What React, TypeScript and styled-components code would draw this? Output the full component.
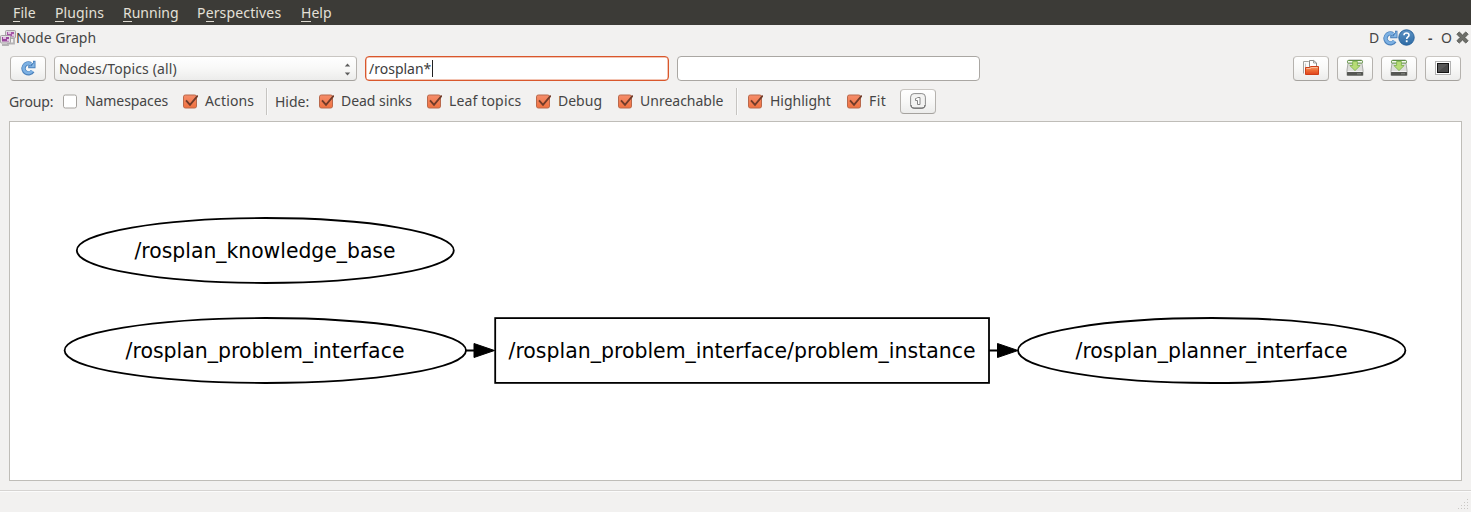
import React from 'react';
import styled, { createGlobalStyle } from 'styled-components';

const GlobalStyle = createGlobalStyle`
  * { box-sizing: border-box; }
  html, body { margin: 0; padding: 0; overflow: hidden; background: #f2f1f0; }
`;

const Window = styled.div`
  width: 100vw;
  height: 100vh;
  display: flex;
  flex-direction: column;
  background: #f2f1f0;
  color: #454545;
  font: 14px/20px "Noto Sans", "Open Sans", sans-serif;
`;

const MenuBar = styled.nav`
  height: 25px;
  flex: none;
  display: flex;
  padding: 3px 0 0 13px;
  background: #3c3b37;
  color: #e4e0d8;
`;

const Text = styled.span<{ $width: number; $spacing?: number }>`
  flex: none;
  display: block;
  width: ${p => p.$width}px;
  letter-spacing: ${p => p.$spacing ?? 0}px;
  white-space: nowrap;
`;

const GroupTitle = styled(Text)`
  padding-top: 1px;
`;

const Dash = styled(Text)`
  padding-left: 13px;
  font-weight: 600;
`;

const Mnemonic = styled.span`
  display: inline-block;
  height: 19px;
  border-bottom: 1px solid #dfdbd2;
`;

const TitleBar = styled.header`
  height: 25px;
  flex: none;
  display: flex;
  align-items: center;
  justify-content: space-between;
  padding-right: 2px;
`;

const TitleGroup = styled.div`
  display: flex;
  align-items: center;
`;

const Icon = styled.svg`
  display: block;
  flex: none;
`;

const Toolbar = styled.div`
  height: 37px;
  flex: none;
  display: flex;
  gap: 8px;
  padding: 6px 10px 0;
`;

const ToolButton = styled.button`
  width: 36px;
  height: 25px;
  flex: none;
  display: flex;
  align-items: center;
  justify-content: center;
  padding: 0 1px 1px 0;
  border: 1px solid #b5b2ae;
  border-top-color: #c9c6c2;
  border-bottom-color: #a5a29e;
  border-radius: 4px;
  background: linear-gradient(#ffffff, #f8f8f7 50%, #ececeb);
`;

const Select = styled.div`
  width: 303px;
  height: 25px;
  display: flex;
  justify-content: space-between;
  align-items: center;
  padding: 0 5px 0 4px;
  border: 1px solid #b5b2ae;
  border-top-color: #c9c6c2;
  border-bottom-color: #a5a29e;
  border-radius: 4px;
  background: linear-gradient(#ffffff, #f8f8f7 50%, #ececeb);
`;

const Field = styled.div<{ $focused?: boolean }>`
  width: ${p => (p.$focused ? 304 : 303)}px;
  height: 25px;
  display: flex;
  align-items: center;
  padding: 0 3px;
  border: ${p => (p.$focused ? '1px solid #d9572c' : '1px solid #aaa7a3')};
  border-radius: 4px;
  background: #fff;
  color: #3c3c3c;
  box-shadow: ${p => (p.$focused ? 'inset 0 0 0 0.5px #e78a69' : 'none')};
`;

const Caret = styled.span`
  width: 1px;
  height: 17px;
  background: #222;
`;

const Spacer = styled.div`
  flex: 1;
`;

const Options = styled.div`
  height: 34px;
  flex: none;
  display: flex;
  align-items: center;
  padding: 0 0 6px 9px;
`;

const Check = styled.label<{ $gap: number }>`
  display: flex;
  align-items: center;
  gap: 7px;
  margin-right: ${p => p.$gap}px;
`;

const Divider = styled.div<{ $before: number; $after: number }>`
  width: 2px;
  height: 27px;
  margin: 0 ${p => p.$after}px 0 ${p => p.$before}px;
  border-left: 1px solid #c6c4c1;
  border-right: 1px solid #fafafa;
`;

const Canvas = styled.main`
  height: 360px;
  flex: none;
  margin: 0 9px;
  border: 1px solid #bfbdb8;
  background: #fff;
`;

const StatusBar = styled.footer`
  flex: 1;
  margin-top: 9px;
  display: flex;
  justify-content: flex-end;
  align-items: flex-end;
  border-top: 1px solid #d6d4d2;
  box-shadow: inset 0 1px #fbfbfb;
`;

function Refresh({ size = 16 }: { size?: number }) {
  return (
    <Icon width={size} height={size} viewBox="0 0 16 16">
      <path d="M10.8 4.1A4.9 4.9 0 1 0 12.6 11.1" fill="none" stroke="#4a80bb" strokeWidth="4.4" />
      <path d="M15.5.8v7.4H8.2V5.4h2L11 4l2-1.2V.8z" fill="#4a80bb" />
      <path d="M11 4.2A4.8 4.8 0 1 0 12.3 10.8" fill="none" stroke="#7db1e3" strokeWidth="2.7" />
      <path d="M14.6 1.8v5.5H9.2v-1h2.4l1.2-2 .9-.7V1.8z" fill="#86b6e4" />
    </Icon>
  );
}

function GraphIcon() {
  return (
    <Icon width="16" height="16" viewBox="0 0 16 16">
      <path d="M2 15h6v-1.5h6V8h-3" fill="none" stroke="#b5b3b5" strokeWidth="1.8" />
      <rect x="5.5" y=".5" width="10" height="7.5" rx="1" fill="#dedade" stroke="#a5a1a5" />
      <rect x="7" y="2" width="7" height="4.5" fill="#a555a6" />
      <path d="M8 2h3v2H8zM12 4h2v2h-2z" fill="#e0bce1" />
      <rect x=".5" y="5.5" width="10" height="7.5" rx="1" fill="#e3dfe3" stroke="#a5a1a5" />
      <rect x="2" y="7" width="7" height="4.5" fill="#9a489c" />
      <path d="M3 7h3v2H3zM7 9h2v2H7z" fill="#e0bce1" />
    </Icon>
  );
}

function HelpIcon() {
  return (
    <Icon width="17" height="17" viewBox="0 0 17 17">
      <defs>
        <linearGradient id="help" x1="0" y1="0" x2="0" y2="1">
          <stop stopColor="#5c92c4" /><stop offset="1" stopColor="#2d6ba5" />
        </linearGradient>
      </defs>
      <circle cx="8.5" cy="8.5" r="7.7" fill="url(#help)" stroke="#28639c" />
      <path d="M6 6.2C6 4.8 7 4 8.5 4S11 4.9 11 6.2c0 1.7-2.3 1.7-2.3 3.8" fill="none" stroke="#fff" strokeWidth="1.6" />
      <rect x="7.8" y="11.3" width="1.8" height="1.9" fill="#fff" />
    </Icon>
  );
}

function CloseIcon() {
  return (
    <Icon width="13" height="13" viewBox="0 0 14 14">
      <path d="M3.5 1 7 4.4 10.5 1 13 3.5 9.6 7l3.4 3.5-2.5 2.5L7 9.6 3.5 13 1 10.5 4.4 7 1 3.5z" fill="#6d6e69" stroke="#555652" />
    </Icon>
  );
}

function FolderIcon() {
  return (
    <Icon width="18" height="18" viewBox="0 0 18 18">
      <defs>
        <linearGradient id="folder" x1="0" y1="0" x2="0" y2="1">
          <stop stopColor="#f7a06c" /><stop offset=".5" stopColor="#ee6c36" /><stop offset="1" stopColor="#e0431c" />
        </linearGradient>
      </defs>
      <path d="M1.5 14.5v-12h5l2 2v5" fill="#fafafa" stroke="#a3a3a0" />
      <path d="M3.5 14.5v-10" stroke="#c9c9c6" />
      <path d="M7.5 9V1.5h4.2L14.5 4v6" fill="#fff" stroke="#8b8b88" />
      <path d="M11.5 1.5V4h3" fill="none" stroke="#8b8b88" strokeWidth=".8" />
      <path d="M3.5 8.5h4l1-1h8v8h-13z" fill="url(#folder)" stroke="#cf3e17" />
      <path d="M4.5 9.5h4l1-1h6" fill="none" stroke="#f9ba97" />
    </Icon>
  );
}

function SaveIcon() {
  return (
    <Icon width="18" height="18" viewBox="0 0 18 18">
      <path d="M2.5 1h13l1.5 10v5.5H1V11z" fill="#dededc" stroke="#989a95" strokeWidth=".8" />
      <rect x="1" y="12.8" width="16" height="3.8" rx=".8" fill="#555753" />
      <path d="M1.5 12.5h15" stroke="#f4f4f4" />
      <path d="M11 14.8h4" stroke="#888a85" />
      <rect x="1.5" y="1.5" width="15" height="2.6" rx=".8" fill="#f5f9ef" stroke="#5f9042" />
      <path d="M6.6 2.5h4.8v4h2.8L9 11.6 3.8 6.5h2.8z" fill="#b7dc76" stroke="#79ae4a" strokeWidth=".8" />
    </Icon>
  );
}

function ScreenIcon() {
  return (
    <Icon width="16" height="14" viewBox="0 0 16 14">
      <rect x=".5" y=".5" width="15" height="13" fill="#fff" stroke="#b2b2b2" />
      <rect x="2.5" y="2.5" width="11" height="9" fill="#4a4a4a" stroke="#151515" />
      <path d="M3 11V3h10z" fill="#6b6b6b" opacity=".45" />
    </Icon>
  );
}

function OneIcon() {
  return (
    <Icon width="16" height="16" viewBox="0 0 16 16">
      <rect x=".6" y=".6" width="14.8" height="14.8" rx="3.5" fill="#f3f3f2" stroke="#8c8c8c" />
      <path d="M1 12c.3 2 1 3 3 3h8c2 0 2.7-1 3-3" fill="none" stroke="#656565" />
      <path d="M7.5 11.5v-4h-2v-2C7 5.5 7 4.5 8 4.5h2v7z" fill="#fff" stroke="#858585" />
    </Icon>
  );
}

function CheckMark({ checked }: { checked: boolean }) {
  return (
    <Icon width="15" height="15" viewBox="0 0 15 15">
      <defs>
        <linearGradient id="box" x1="0" y1="0" x2="0" y2="1">
          <stop stopColor="#f58d6b" /><stop offset="1" stopColor="#f0713f" />
        </linearGradient>
      </defs>
      <rect x=".5" y="1" width="13" height="13" rx="1.8" fill={checked ? 'url(#box)' : '#fff'} stroke={checked ? '#b9694c' : '#a5a29e'} />
      {checked && <path d="m3 6.4 4 4.4L14.8 1.6" fill="none" stroke="#713b29" strokeWidth="1.9" />}
    </Icon>
  );
}

type MenuItem = { before?: string; key: string; rest: string; width: number; spacing: number };
const menus: MenuItem[] = [
  { key: 'F', rest: 'ile', width: 42, spacing: 0.1 },
  { key: 'P', rest: 'lugins', width: 68, spacing: 0.1 },
  { key: 'R', rest: 'unning', width: 74, spacing: 0 },
  { before: 'P', key: 'e', rest: 'rspectives', width: 104, spacing: 0.15 },
  { key: 'H', rest: 'elp', width: 40, spacing: 0 },
];

type OptionProps = { label: string; width: number; gap: number; spacing?: number; checked?: boolean };
function Option({ label, width, gap, spacing = 0, checked = true }: OptionProps) {
  return (
    <Check $gap={gap}>
      <CheckMark checked={checked} />
      <Text $width={width} $spacing={spacing}>{label}</Text>
    </Check>
  );
}

const nodes = [
  { cx: 265.3, cy: 250.5, rx: 188.5, label: '/rosplan_knowledge_base', x: 134.5, length: 261 },
  { cx: 265.3, cy: 350.5, rx: 200.7, label: '/rosplan_problem_interface', x: 125.5, length: 279 },
  { cx: 1211.7, cy: 350.5, rx: 193.7, label: '/rosplan_planner_interface', x: 1075.5, length: 272 },
];

function Graph() {
  return (
    <Icon
      width="1451"
      height="358"
      viewBox="10 122 1451 358"
      fill="none"
      stroke="#000"
      strokeWidth="1.8"
      fontFamily="'DejaVu Sans', sans-serif"
      fontSize="21.8"
    >
      {nodes.map(n => (
        <g key={n.label}>
          <ellipse cx={n.cx} cy={n.cy} rx={n.rx} ry="32.5" />
          <text x={n.x} y={n.cy + 7.5} textLength={n.length} lengthAdjust="spacingAndGlyphs" fill="#000" stroke="none">{n.label}</text>
        </g>
      ))}
      <rect x="495.2" y="318.1" width="493.8" height="64.8" />
      <text x="508.5" y="358" textLength="467" lengthAdjust="spacingAndGlyphs" fill="#000" stroke="none">/rosplan_problem_interface/problem_instance</text>
      <path d="M466 350.5h9M989 350.5h9" />
      <path d="M474 343.5l20.5 7-20.5 7zM997.5 343.5l20.5 7-20.5 7z" fill="#000" strokeWidth="1" />
    </Icon>
  );
}

const gripDots = [[9, 0], [6, 3], [9, 3], [3, 6], [6, 6], [9, 6], [0, 9], [3, 9], [6, 9], [9, 9]];

export default function App() {
  return (
    <Window>
      <GlobalStyle />
      <MenuBar>
        {menus.map(m => (
          <Text key={m.rest} $width={m.width} $spacing={m.spacing}>
            {m.before}<Mnemonic>{m.key}</Mnemonic>{m.rest}
          </Text>
        ))}
      </MenuBar>
      <TitleBar>
        <TitleGroup>
          <GraphIcon />
          <Text $width={90}>Node Graph</Text>
        </TitleGroup>
        <TitleGroup>
          <Text $width={13}>D</Text>
          <Refresh />
          <HelpIcon />
          <Dash $width={26}>-</Dash>
          <Text $width={15}>O</Text>
          <CloseIcon />
        </TitleGroup>
      </TitleBar>
      <Toolbar>
        <ToolButton><Refresh /></ToolButton>
        <Select>
          <Text $width={120} $spacing={0.12}>Nodes/Topics (all)</Text>
          <Icon width="7" height="14" viewBox="0 0 7 14"><path d="m.8 4.5 2.7-3 2.7 3zM.8 10.5l2.7 3 2.7-3z" fill="#5d5d5d" /></Icon>
        </Select>
        <Field $focused><Text $width={63}>/rosplan*</Text><Caret /></Field>
        <Field />
        <Spacer />
        <ToolButton><FolderIcon /></ToolButton>
        <ToolButton><SaveIcon /></ToolButton>
        <ToolButton><SaveIcon /></ToolButton>
        <ToolButton><ScreenIcon /></ToolButton>
      </Toolbar>
      <Options>
        <GroupTitle $width={54} $spacing={-0.15}>Group:</GroupTitle>
        <Option label="Namespaces" width={84} gap={14} checked={false} spacing={-0.08} />
        <Option label="Actions" width={50} gap={0} spacing={0.15} />
        <Divider $before={11} $after={7} />
        <GroupTitle $width={44}>Hide:</GroupTitle>
        <Option label="Dead sinks" width={72} gap={14} spacing={-0.05} />
        <Option label="Leaf topics" width={73} gap={14} spacing={0.15} />
        <Option label="Debug" width={45} gap={15} />
        <Option label="Unreachable" width={84} gap={0} />
        <Divider $before={12} $after={10} />
        <Option label="Highlight" width={62} gap={15} />
        <Option label="Fit" width={18} gap={13} spacing={0.4} />
        <ToolButton><OneIcon /></ToolButton>
      </Options>
      <Canvas><Graph /></Canvas>
      <StatusBar>
        <Icon width="13" height="14" viewBox="0 0 13 14">
          {gripDots.map(([x, y]) => <rect key={`${x}-${y}`} x={x} y={y + 1} width="1" height="1" fill="#c9c7c4" />)}
        </Icon>
      </StatusBar>
    </Window>
  );
}
